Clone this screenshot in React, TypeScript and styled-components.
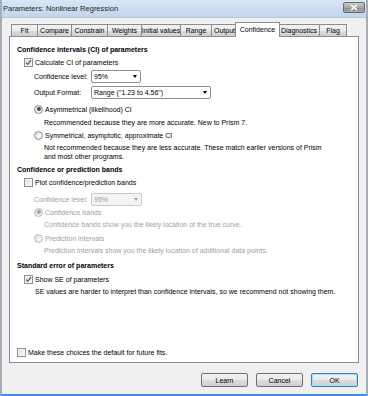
import React from 'react'
import styled, { createGlobalStyle, css } from 'styled-components'

const GlobalStyle = createGlobalStyle`
  html, body {
    margin: 0;
    padding: 0;
    background: #f0f0f0;
  }
  body {
    font-family: "Liberation Sans", Arial, sans-serif;
    font-size: 7px;
    color: #000;
  }
`

const tabs = [
  { label: 'Fit', width: 27 },
  { label: 'Compare', width: 35 },
  { label: 'Constrain', width: 37 },
  { label: 'Weights', width: 35 },
  { label: 'Initial values', width: 40 },
  { label: 'Range', width: 32 },
  { label: 'Output', width: 27 },
  { label: 'Confidence', width: 45 },
  { label: 'Diagnostics', width: 42 },
  { label: 'Flag', width: 28 },
]

const CheckMark = () => (
  <svg width="7" height="7" viewBox="0 0 7 7">
    <path d="M1 3.6 L2.8 5.4 L6 1.2" fill="none" stroke="#4a5a6a" strokeWidth="1.2" />
  </svg>
)

const Check: React.FC<{ checked?: boolean; label: string; disabled?: boolean; $indent: number; $mt?: number }> = ({ checked, label, disabled, $indent, $mt }) => (
  <CheckRow $indent={$indent} $mt={$mt} $disabled={disabled}>
    <Box $disabled={disabled}>{checked && <CheckMark />}</Box>
    <span>{label}</span>
  </CheckRow>
)

const Radio: React.FC<{ checked?: boolean; label: string; disabled?: boolean; $mt?: number }> = ({ checked, label, disabled, $mt }) => (
  <RadioRow $mt={$mt} $disabled={disabled}>
    <Dot $disabled={disabled}>{checked && <Pip $disabled={disabled} />}</Dot>
    <span>{label}</span>
  </RadioRow>
)

const Combo: React.FC<{ value: string; width: number; disabled?: boolean }> = ({ value, width, disabled }) => (
  <Select $disabled={disabled} style={{ width }}>
    <span>{value}</span>
    <Arrow $disabled={disabled} />
  </Select>
)

const App: React.FC = () => {
  return (
    <>
      <GlobalStyle />
      <Window>
        <TitleBar>
          <Title>Parameters: Nonlinear Regression</Title>
          <CloseButton>
            <svg width="8" height="7" viewBox="0 0 8 7">
              <path d="M1 1 L7 6 M7 1 L1 6" stroke="#fff" strokeWidth="1.6" />
            </svg>
          </CloseButton>
        </TitleBar>
        <Body>
          <TabStrip>
            {tabs.map((t) => (
              <Tab key={t.label} $active={t.label === 'Confidence'} $width={t.width}>
                {t.label}
              </Tab>
            ))}
          </TabStrip>
          <Panel>
            <Heading>Confidence intervals (CI) of parameters</Heading>
            <Check checked label="Calculate CI of parameters" $indent={7} />
            <Field $mt={2}>
              <span>Confidence level:</span>
              <Combo value="95%" width={50} />
            </Field>
            <Field $mt={3}>
              <span>Output Format:</span>
              <Combo value={'Range ("1.23 to 4.56")'} width={120} />
            </Field>
            <Radio checked label="Asymmetrical (likelihood) CI" $mt={4} />
            <Note $mt={3}>Recommended because they are more accurate. New to Prism 7.</Note>
            <Radio label="Symmetrical, asymptotic, approximate CI" $mt={2} />
            <Note $mt={2}>
              Not recommended because they are less accurate. These match earlier versions of Prism
              <br />
              and most other programs.
            </Note>

            <Heading $mt={3}>Confidence or prediction bands</Heading>
            <Check label="Plot confidence/prediction bands" $indent={7} />
            <Field $mt={5} $disabled>
              <span>Confidence level:</span>
              <Combo value="95%" width={51} disabled />
            </Field>
            <Radio checked disabled label="Confidence bands" />
            <Note $mt={2} $disabled>Confidence bands show you the likely location of the true curve.</Note>
            <Radio disabled label="Prediction intervals" $mt={3} />
            <Note $mt={2} $disabled>Prediction intervals show you the likely location of additional data points.</Note>

            <Heading $mt={5}>Standard error of parameters</Heading>
            <Check checked label="Show SE of parameters" $indent={7} $mt={1} />
            <SeNote $mt={2}>SE values are harder to interpret than confidence intervals, so we recommend not showing them.</SeNote>

            <Spacer />
            <Check label="Make these choices the default for future fits." $indent={0} />
          </Panel>
          <Footer>
            <Button>Learn</Button>
            <Button>Cancel</Button>
            <Button $default>OK</Button>
          </Footer>
        </Body>
      </Window>
    </>
  )
}

export default App

const Window = styled.div`
  width: 368px;
  height: 396px;
  box-sizing: border-box;
  display: flex;
  flex-direction: column;
  background: #f0f0f0;
  border-left: 2px solid #a4adb8;
  border-right: 2px solid #a4adb8;
  border-bottom: 2px solid #3d8de0;
  overflow: hidden;
`
const TitleBar = styled.div`
  height: 18px;
  flex: none;
  display: flex;
  align-items: center;
  justify-content: space-between;
  padding: 0 1px 0 1px;
  background: linear-gradient(#d9e6f5, #c2d5ec);
  border-bottom: 1px solid #b7c8dc;
  box-sizing: border-box;
`
const Title = styled.span`
  font-size: 7.5px;
  color: #1e1e1e;
`
const CloseButton = styled.div`
  width: 22px;
  height: 11px;
  margin-top: -3px;
  display: flex;
  align-items: center;
  justify-content: center;
  border: 1px solid #6c6c6c;
  border-radius: 2px;
  background: linear-gradient(#c9c9c9, #a6a6a6 50%, #8f8f8f 51%, #a8a8a8);
  box-sizing: border-box;
`
const Body = styled.div`
  flex: 1;
  display: flex;
  flex-direction: column;
  padding: 4px 7px 0 7px;
`
const TabStrip = styled.div`
  height: 14px;
  display: flex;
  align-items: flex-end;
  padding-left: 2px;
  position: relative;
  z-index: 1;
`
const Tab = styled.div<{ $active?: boolean; $width: number }>`
  width: ${(p) => p.$width}px;
  height: 12px;
  box-sizing: border-box;
  display: flex;
  align-items: center;
  justify-content: center;
  white-space: nowrap;
  border: 1px solid #898c95;
  border-bottom: none;
  margin-right: -1px;
  background: linear-gradient(#f2f2f2, #ebebeb 50%, #dddddd 51%, #cfcfcf);
  ${(p) =>
    p.$active &&
    css`
      height: 15px;
      margin: 0 -2px -1px -2px;
      padding-bottom: 2px;
      background: #fff;
      position: relative;
    `}
`
const Panel = styled.div`
  height: 327px;
  box-sizing: border-box;
  display: flex;
  flex-direction: column;
  background: #fff;
  border: 1px solid #898c95;
  padding: 7px 0 4px 7px;
`
const Heading = styled.div<{ $mt?: number }>`
  height: 12px;
  line-height: 12px;
  font-weight: bold;
  margin-top: ${(p) => p.$mt ?? 0}px;
`
const CheckRow = styled.div<{ $indent: number; $mt?: number; $disabled?: boolean }>`
  height: 12px;
  display: flex;
  align-items: center;
  gap: 2px;
  margin-left: ${(p) => p.$indent}px;
  margin-top: ${(p) => p.$mt ?? 0}px;
  color: ${(p) => (p.$disabled ? '#a0a0a0' : '#000')};
`
const Box = styled.span<{ $disabled?: boolean }>`
  width: 9px;
  height: 9px;
  box-sizing: border-box;
  display: flex;
  align-items: center;
  justify-content: center;
  border: 1px solid #8f8f8f;
  background: linear-gradient(135deg, #dcdcdc, #fbfbfb);
  box-shadow: inset 0 0 0 1px #f4f4f4;
`
const Field = styled.div<{ $mt?: number; $disabled?: boolean }>`
  height: 13px;
  display: grid;
  grid-template-columns: 57px auto;
  align-items: center;
  margin: ${(p) => p.$mt ?? 0}px 0 0 17px;
  color: ${(p) => (p.$disabled ? '#a0a0a0' : '#000')};
`
const Select = styled.div<{ $disabled?: boolean }>`
  height: 13px;
  box-sizing: border-box;
  display: flex;
  align-items: center;
  justify-content: space-between;
  padding: 0 3px 0 2px;
  border: 1px solid ${(p) => (p.$disabled ? '#c9c9c9' : '#8e8f8f')};
  border-radius: 2px;
  background: ${(p) => (p.$disabled ? '#f4f4f4' : '#fff')};
  color: ${(p) => (p.$disabled ? '#a0a0a0' : '#000')};
`
const Arrow = styled.span<{ $disabled?: boolean }>`
  width: 0;
  height: 0;
  border-left: 2.5px solid transparent;
  border-right: 2.5px solid transparent;
  border-top: 3px solid ${(p) => (p.$disabled ? '#a0a0a0' : '#000')};
`
const RadioRow = styled.div<{ $mt?: number; $disabled?: boolean }>`
  height: 12px;
  display: flex;
  align-items: center;
  gap: 2px;
  margin: ${(p) => p.$mt ?? 0}px 0 0 17px;
  color: ${(p) => (p.$disabled ? '#a0a0a0' : '#000')};
`
const Dot = styled.span<{ $disabled?: boolean }>`
  width: 9px;
  height: 9px;
  box-sizing: border-box;
  border-radius: 50%;
  display: flex;
  align-items: center;
  justify-content: center;
  border: 1px solid ${(p) => (p.$disabled ? '#bcbcbc' : '#8f8f8f')};
  background: radial-gradient(circle at 65% 65%, #fdfdfd, #d6d6d6);
`
const Pip = styled.span<{ $disabled?: boolean }>`
  width: 4px;
  height: 4px;
  border-radius: 50%;
  background: ${(p) => (p.$disabled ? '#9aa0a4' : '#3c4e58')};
`
const Note = styled.div<{ $mt?: number; $disabled?: boolean }>`
  line-height: 9px;
  margin: ${(p) => p.$mt ?? 0}px 0 0 27px;
  color: ${(p) => (p.$disabled ? '#a0a0a0' : '#000')};
  white-space: nowrap;
`
const SeNote = styled(Note)`
  margin-left: 18px;
`
const Spacer = styled.div`
  flex: 1;
`
const Footer = styled.div`
  display: flex;
  justify-content: flex-end;
  gap: 8px;
  padding: 10px 1px 0 0;
`
const Button = styled.div<{ $default?: boolean }>`
  width: 47px;
  height: 14px;
  box-sizing: border-box;
  display: flex;
  align-items: center;
  justify-content: center;
  border: 1px solid #707070;
  border-radius: 2px;
  background: linear-gradient(#f2f2f2, #ebebeb 50%, #dddddd 51%, #cfcfcf);
  ${(p) =>
    p.$default &&
    css`
      border-color: #3c7fb1;
      box-shadow: inset 0 0 0 1px #9fe0fa;
    `}
`
